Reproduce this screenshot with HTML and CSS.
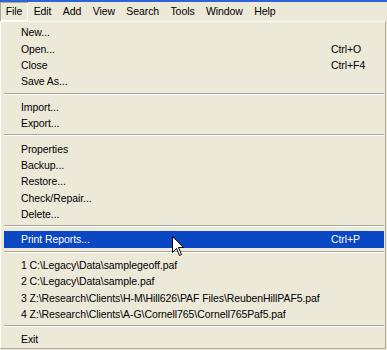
FILE: index.html
```html
<!DOCTYPE html>
<html lang="en">
<head>
    <meta charset="UTF-8">
    <title>File menu</title>
    <link rel="stylesheet" href="styles.css">
</head>
<body>
    <div class="window">
        <!-- Application menu bar -->
        <ul class="menubar">
            <li class="open">File</li>
            <li>Edit</li>
            <li>Add</li>
            <li>View</li>
            <li>Search</li>
            <li>Tools</li>
            <li>Window</li>
            <li>Help</li>
        </ul>

        <!-- Dropped-down File menu -->
        <div class="menu">
            <div class="item"><span>New...</span></div>
            <div class="item"><span>Open...</span><span class="key">Ctrl+O</span></div>
            <div class="item"><span>Close</span><span class="key">Ctrl+F4</span></div>
            <div class="item"><span>Save As...</span></div>
            <div class="sep"></div>
            <div class="item"><span>Import...</span></div>
            <div class="item"><span>Export...</span></div>
            <div class="sep"></div>
            <div class="item"><span>Properties</span></div>
            <div class="item"><span>Backup...</span></div>
            <div class="item"><span>Restore...</span></div>
            <div class="item"><span>Check/Repair...</span></div>
            <div class="item"><span>Delete...</span></div>
            <div class="sep"></div>
            <div class="item selected"><span>Print Reports...</span><span class="key">Ctrl+P</span></div>
            <div class="sep"></div>
            <div class="item"><span>1 C:\Legacy\Data\samplegeoff.paf</span></div>
            <div class="item"><span>2 C:\Legacy\Data\sample.paf</span></div>
            <div class="item"><span>3 Z:\Research\Clients\H-M\Hill626\PAF Files\ReubenHillPAF5.paf</span></div>
            <div class="item"><span>4 Z:\Research\Clients\A-G\Cornell765\Cornell765Paf5.paf</span></div>
            <div class="sep"></div>
            <div class="item"><span>Exit</span></div>
        </div>

        <!-- Mouse pointer resting on the selected item -->
        <svg class="cursor" width="13" height="21" viewBox="0 0 13 21">
            <path d="M0.5 0.5 L0.5 16.5 L4.5 12.5 L7.5 19.5 L9.5 18.5 L6.5 11.5 L11.5 11.5 Z" fill="#fff" stroke="#000" stroke-width="1"/>
        </svg>
    </div>
</body>
</html>
```

FILE: styles.css
```css
* {
    margin: 0;
    padding: 0;
    box-sizing: border-box;
}
body {
    background: #ECE9D8;
    font-family: "Liberation Sans", Arial, sans-serif;
    font-size: 10.5px;
    letter-spacing: -0.08px;
    color: #000;
}
.window {
    position: relative;
    width: 387px;
    height: 350px;
    overflow: hidden;
}
.menubar {
    display: flex;
    list-style: none;
    height: 21px;
    border-top: 2px solid #2f63d9;
    background: #ECE9D8;
}
.menubar li {
    padding: 0 5.7px;
    line-height: 19px;
}
.menubar li.open {
    box-shadow: inset 1px 1px 0 #aca899, inset -1px -1px 0 #fff;
}
.menu {
    width: 386px;
    border-top: 1px solid #fff;
    border-left: 1px solid #fff;
    border-right: 1px solid #aca899;
    border-bottom: 1px solid #aca899;
    padding: 2px 1px 0 3px;
}
.item {
    display: grid;
    grid-template-columns: 1fr 53px;
    align-items: center;
    height: 16.4px;
    padding-left: 17px;
    white-space: nowrap;
}
.item.selected {
    background: #0a47c2;
    color: #fff;
}
.sep {
    height: 9px;
    padding-top: 3px;
}
.sep::before {
    content: "";
    display: block;
    border-top: 1px solid #aca899;
    border-bottom: 1px solid #fff;
}
.cursor {
    position: absolute;
    left: 172px;
    top: 236px;
}
```
